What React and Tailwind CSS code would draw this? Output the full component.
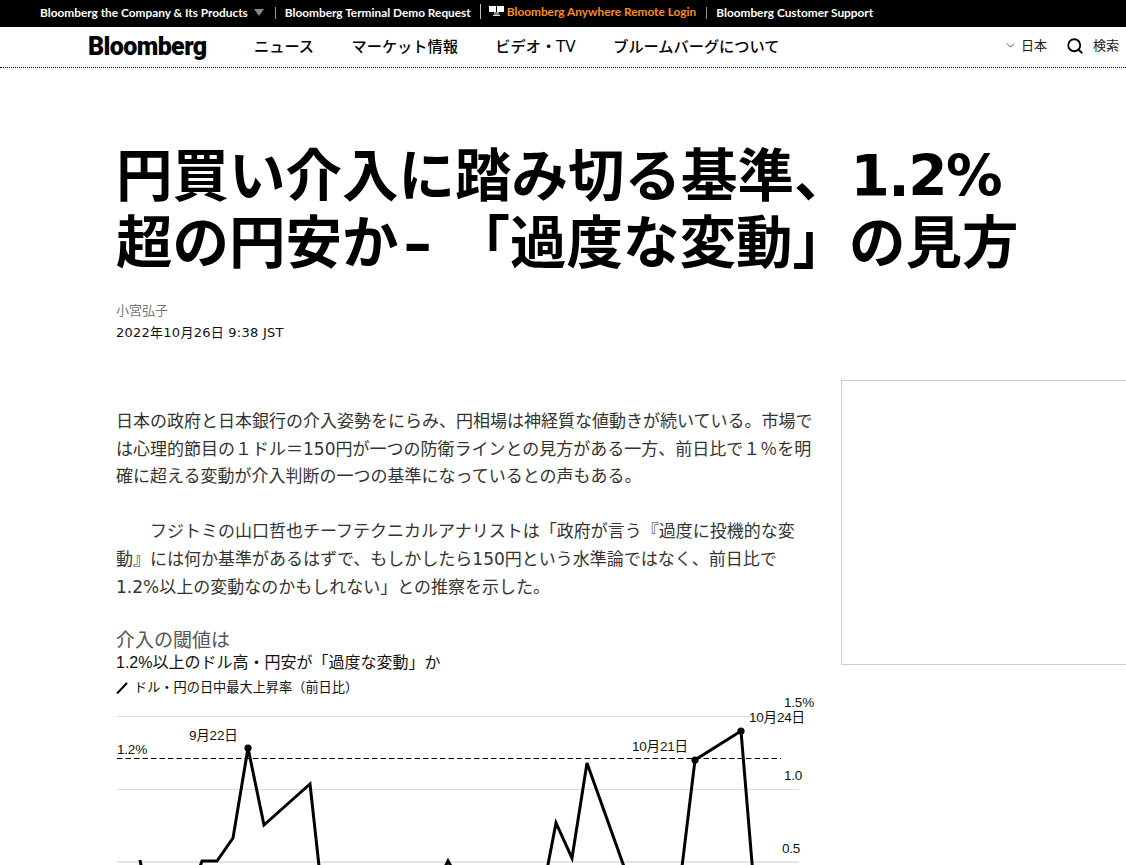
import { ChevronDown, Search } from 'lucide-react';

const jp = { fontFamily: '"DejaVu Sans", "Noto Sans CJK JP", sans-serif' };
const chartFont = { fontFamily: '"Liberation Sans", "Noto Sans CJK JP", sans-serif' };

function TopLink({ children, className = 'text-white' }) {
    return <a href="#" className={`text-[11.85px] font-bold whitespace-nowrap ${className}`}>{children}</a>;
}

function Divider() {
    return <span className="w-px h-[12px] bg-[#999] ml-[10px] mr-[9px] shrink-0"></span>;
}

function TopBar() {
    return (
        <div className="flex items-center h-[27px] bg-black pl-[40px] pb-[2px] font-['Lato',sans-serif]">
            <TopLink>Bloomberg the Company &amp; Its Products</TopLink>
            <span className="ml-[6px] mr-[1px] w-0 h-0 border-x-[5px] border-x-transparent border-t-[7px] border-t-[#888]"></span>
            <Divider />
            <TopLink>Bloomberg Terminal Demo Request</TopLink>
            <span className="w-px h-[15px] bg-[#bbb] ml-[9px] mr-[8px] -mt-[3px]"></span>
            <svg width="15" height="11" viewBox="0 0 15 11" className="mr-[3px] -mt-[3px]">
                <rect x="0" y="0" width="7" height="6" fill="#fff" />
                <rect x="8" y="0" width="7" height="6" fill="#fff" />
                <rect x="5" y="6" width="5" height="3" fill="#888" />
                <rect x="4" y="9" width="7" height="1" fill="#ddd" />
            </svg>
            <TopLink className="text-[#fb8b1e] -mt-[2px]">Bloomberg Anywhere Remote Login</TopLink>
            <Divider />
            <TopLink>Bloomberg Customer Support</TopLink>
        </div>
    );
}

function NavBar() {
    return (
        <div className="flex items-center h-[41px] pl-[88px] pr-[7px] border-b border-dotted border-black text-black" style={jp}>
            <a href="#" className="w-[166px] font-['Roboto',sans-serif] font-black text-[25px] tracking-[-0.6px] leading-none -mt-[2px]">Bloomberg</a>
            <nav className="flex gap-[37.5px] text-[15.2px] font-medium">
                <a href="#">ニュース</a>
                <a href="#">マーケット情報</a>
                <a href="#">ビデオ・TV</a>
                <a href="#">ブルームバーグについて</a>
            </nav>
            <div className="ml-auto flex items-center text-[13px] text-[#222] -mt-[3px]">
                <ChevronDown size={13} strokeWidth={1.5} className="mr-[4px] text-[#222]" />
                <span>日本</span>
                <Search size={18} strokeWidth={2.4} className="ml-[19px] mr-[9px] text-black" />
                <span>検索</span>
            </div>
        </div>
    );
}

function Chart() {
    const line1 = '140,860 143,875';
    const line2 = '197,875 202,861 217,861 233,838 248,748 264,825 310,784 320,875';
    const line3 = '441,875 448,861 456,875';
    const line4 = '546,875 556,823 572,858 587,763 627,875';
    const line5 = '681,875 695,760 741,731 753,875';
    const labels = [
        { x: 189, y: 740, t: '9月22日' },
        { x: 117, y: 754, t: '1.2%' },
        { x: 632, y: 751, t: '10月21日' },
        { x: 749, y: 722, t: '10月24日' },
        { x: 784, y: 707, t: '1.5%' },
        { x: 784, y: 780, t: '1.0' },
        { x: 782, y: 853, t: '0.5' },
    ];
    return (
        <svg viewBox="116 695 700 180" width="700" height="180" className="block -mt-[3px]">
            <line x1="117" x2="799" y1="716.5" y2="716.5" stroke="#ddd" />
            <line x1="117" x2="799" y1="789.5" y2="789.5" stroke="#ddd" />
            <line x1="117" x2="799" y1="862" y2="862" stroke="#ddd" strokeWidth="1.5" />
            <line x1="117" x2="781" y1="758.5" y2="758.5" stroke="#000" strokeWidth="1" strokeDasharray="5.5 3" />
            {[line1, line2, line3, line4, line5].map((p) => (
                <polyline key={p} points={p} fill="none" stroke="#000" strokeWidth="3" strokeLinejoin="miter" />
            ))}
            <circle cx="248" cy="748" r="3.6" fill="#000" />
            <circle cx="695" cy="760" r="3.6" fill="#000" />
            <circle cx="741" cy="731" r="3.6" fill="#000" />
            {labels.map((l) => (
                <text key={l.t} x={l.x} y={l.y} fontSize="13.5" fill="#111" style={chartFont} letterSpacing="-0.2">{l.t}</text>
            ))}
        </svg>
    );
}

export default function App() {
    return (
        <div className="h-screen overflow-hidden bg-white" style={jp}>
            <TopBar />
            <NavBar />
            <main className="pl-[116px]">
                <h1 className="pt-[75px] text-[56.5px] leading-[67px] font-bold text-black whitespace-nowrap">
                    円買い介入に踏み切る基準、<span className="tracking-[-1.5px]">1.2%</span><br />
                    超の円安か<span className="inline-block w-[55px] pl-[5px] font-['DejaVu_Sans',sans-serif]">–</span>「過度な変動」の見方
                </h1>
                <div className="mt-[23px] text-[13px] leading-[22px]">
                    <div className="text-[#777]">小宮弘子</div>
                    <div className="text-[#111] tracking-[0.25px]">2022年10月26日 9:38 JST</div>
                </div>
                <div className="flex mt-[36px]">
                    <div className="w-[700px] shrink-0 pt-[28px]">
                        <p className="text-[17px] leading-[27.7px] text-[#333]">
                            日本の政府と日本銀行の介入姿勢をにらみ、円相場は神経質な値動きが続いている。市場で<br />
                            は心理的節目の１ドル＝150円が一つの防衛ラインとの見方がある一方、前日比で１％を明<br />
                            確に超える変動が介入判断の一つの基準になっているとの声もある。
                        </p>
                        <p className="mt-[27px] text-[17px] leading-[27.7px] text-[#333] indent-[34px]">
                            フジトミの山口哲也チーフテクニカルアナリストは「政府が言う『過度に投機的な変<br />
                            動』には何か基準があるはずで、もしかしたら150円という水準論ではなく、前日比で<br />
                            1.2%以上の変動なのかもしれない」との推察を示した。
                        </p>
                        <div className="mt-[29px] text-[19px] leading-[22px] text-[#555]" style={chartFont}>介入の閾値は</div>
                        <div className="text-[16px] leading-[22px] text-[#111]" style={chartFont}>1.2%以上のドル高・円安が「過度な変動」か</div>
                        <div className="mt-[4px] flex items-center text-[13.2px] leading-[20px] text-[#111]" style={chartFont}>
                            <svg width="12" height="12" viewBox="0 0 12 12" className="mr-[6px]">
                                <line x1="1" y1="11.5" x2="11" y2="1" stroke="#000" strokeWidth="2" />
                            </svg>
                            ドル・円の日中最大上昇率（前日比）
                        </div>
                        <Chart />
                    </div>
                    <aside className="ml-[25px] w-[300px] h-[285px] shrink-0 border border-[#ccc]"></aside>
                </div>
            </main>
        </div>
    );
}
